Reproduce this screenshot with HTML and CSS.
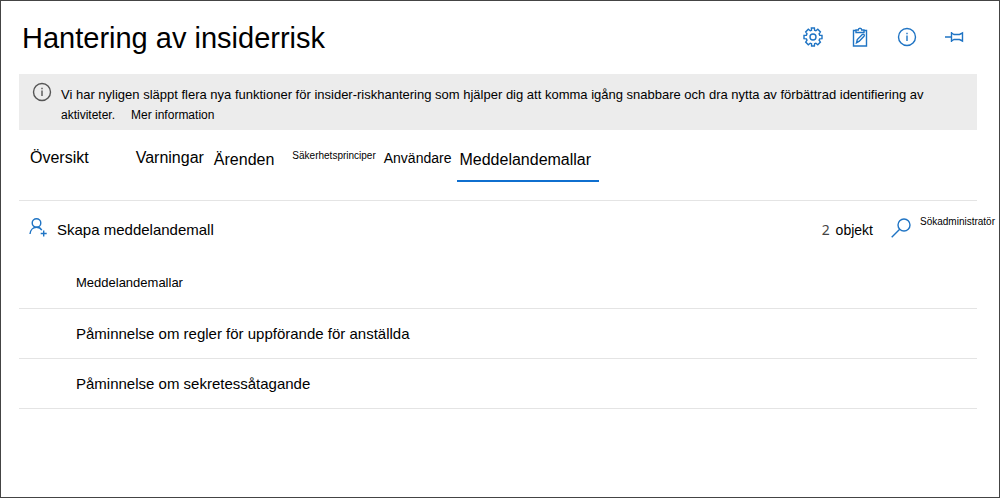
FILE: index.html
```html
<!DOCTYPE html>
<html lang="sv">
<head>
<meta charset="utf-8">
<meta name="viewport" content="width=device-width, initial-scale=1">
<title>Hantering av insiderrisk</title>
<link rel="stylesheet" href="styles.css">
</head>
<body class="page">
<header class="header">
  <h1 class="title">Hantering av insiderrisk</h1>
  <div class="actions">
    <button class="icon-button" type="button" aria-label="Inställningar">
      <svg class="icon" viewBox="0 0 20 20"><path d="M8.400 1L8.500 3.200 7.200 3.800 5.300 2.300 2.700 4.900 4 6.900 3.400 8.300 1 8.400v3.200l2.400.2.600 1.300-1.300 2 2.600 2.600 1.900-1.500 1.300.6.100 2.200h2.800l.2-2.200 1.300-.6 1.900 1.500 2.600-2.600-1.300-2 .6-1.300 2.300-.2V8.400l-2.300-.1-.6-1.400 1.300-2-2.600-2.600-1.900 1.500-1.300-.6L11.400 1z"/><circle cx="10" cy="10" r="3"/></svg>
    </button>
    <button class="icon-button" type="button" aria-label="Uppgifter">
      <svg class="icon" viewBox="0 0 20 20"><path d="M6 3.500H3.500v15.500h13V3.500H14M6 5.500V3h2.300c0-2.400 3.400-2.400 3.400 0H14v2.500z"/><path d="M6.500 15.800l.8-3.300 5-5c1.200-1 2.700.5 1.700 1.700l-4.700 5z"/></svg>
    </button>
    <button class="icon-button" type="button" aria-label="Information">
      <svg class="icon" viewBox="0 0 20 20"><circle cx="10" cy="10" r="8.500"/><path d="M10 8.500V14M10 5.800v1.400"/></svg>
    </button>
    <button class="icon-button" type="button" aria-label="Fäst">
      <svg class="icon" viewBox="0 0 20 20"><path d="M1 10h6.500M7.500 5v10M7.500 6L10 7.500h5.500L18.500 6v8l-3-1.500H10L7.500 14"/></svg>
    </button>
  </div>
</header>
<main>
  <section class="notice">
    <svg class="icon notice-icon" viewBox="0 0 20 20"><circle cx="10" cy="10" r="8.500"/><path d="M10 8.500V14M10 5.800v1.400"/></svg>
    <p class="notice-text">Vi har nyligen släppt flera nya funktioner för insider-riskhantering som hjälper dig att komma igång snabbare och dra nytta av förbättrad identifiering av <span class="notice-end">aktiviteter.<a class="notice-link" href="#">Mer information</a></span></p>
  </section>
  <nav class="tabs">
    <a class="tab tab-overview" href="#">Översikt</a>
    <a class="tab" href="#">Varningar</a>
    <a class="tab tab-low" href="#">Ärenden</a>
    <a class="tab tab-tiny" href="#">Säkerhetsprinciper</a>
    <a class="tab tab-small" href="#">Användare</a>
    <a class="tab tab-low tab-active" href="#" aria-current="page">Meddelandemallar</a>
  </nav>
  <div class="toolbar">
    <button class="create" type="button">
      <svg class="icon create-icon" viewBox="0 0 20 20"><circle cx="8.500" cy="6" r="4.300"/><path d="M2 17c.3-4 3-6.700 6.500-6.700 2.300 0 4.300 1 5.300 3M15.700 13.500v6M12.700 16.500h6"/></svg>
      <span>Skapa meddelandemall</span>
    </button>
    <div class="tools">
      <span class="count"><span class="count-number">2</span> objekt</span>
      <button class="search" type="button">
        <svg class="icon search-icon" viewBox="0 0 20 20"><circle cx="13" cy="7" r="6"/><path d="M8.700 11.300L.7 19.300"/></svg>
        <span class="search-label">Sökadministratör</span>
      </button>
    </div>
  </div>
  <table class="templates">
    <thead><tr><th scope="col">Meddelandemallar</th></tr></thead>
    <tbody>
      <tr><td>Påminnelse om regler för uppförande för anställda</td></tr>
      <tr><td>Påminnelse om sekretessåtagande</td></tr>
    </tbody>
  </table>
</main>
</body>
</html>
```
FILE: styles.css
```css
* {
  box-sizing: border-box;
}

.page {
  margin: 0;
  min-height: 100vh;
  padding: 0 22px 0 18px;
  border: 1px solid #444;
  background: #fff;
  color: #000;
  font-family: "Liberation Sans", Arial, sans-serif;
  font-size: 15px;
}

button {
  padding: 0;
  border: 0;
  background: none;
  color: inherit;
  font: inherit;
  cursor: pointer;
}

a {
  color: inherit;
  text-decoration: none;
}

.icon {
  display: block;
  flex: none;
  width: 20px;
  height: 20px;
  fill: none;
  stroke: #1f74c4;
  stroke-width: 1.4;
}

.header {
  display: flex;
  align-items: center;
  justify-content: space-between;
  height: 73px;
  padding: 0 13px 0 3px;
}

.title {
  margin: 2px 0 0;
  font-size: 29px;
  font-weight: 400;
}

.actions {
  display: flex;
  gap: 27px;
  padding-bottom: 2px;
}

.notice {
  display: flex;
  gap: 9px;
  min-height: 56px;
  padding: 8px 16px 4px 13px;
  background: #ececec;
}

.notice-icon {
  stroke: #555;
}

.notice-text {
  margin: 3px 0 0;
  font-size: 13px;
  line-height: 20px;
}

.notice-end {
  font-size: 12px;
}

.notice-link {
  margin-left: 16px;
}

.tabs {
  display: flex;
  align-items: flex-start;
  gap: 8px;
  height: 71px;
  padding: 18px 0 0 11px;
  border-bottom: 1px solid #e4e4e4;
}

.tab {
  font-size: 16px;
  line-height: 20px;
}

.tab-overview {
  margin-right: 39px;
}

.tab-low {
  padding: 2px 0 0 2px;
}

.tab-tiny {
  margin-left: 10px;
  font-size: 10px;
  line-height: 15px;
}

.tab-small {
  font-size: 14px;
}

.tab-active {
  margin-left: -2px;
  padding: 2px 8px 10px 2px;
  border-bottom: 2px solid #0f6fcf;
}

.toolbar {
  display: flex;
  align-items: center;
  justify-content: space-between;
  height: 57px;
  padding-left: 9px;
}

.create {
  display: flex;
  align-items: center;
  gap: 9px;
}

.create-icon {
  margin-bottom: 6px;
}

.tools {
  display: flex;
  align-items: center;
  gap: 18px;
  margin-right: -18px;
}

.count {
  font-size: 14px;
}

.count-number {
  margin-right: 2px;
  color: #444;
  font-family: "Noto Sans", sans-serif;
}

.search {
  display: flex;
  align-items: flex-start;
  gap: 9px;
  padding-bottom: 6px;
}

.search-icon {
  margin-top: 2px;
}

.search-label {
  font-size: 10px;
}

.templates {
  width: 100%;
  border-collapse: collapse;
}

.templates th,
.templates td {
  height: 50px;
  padding: 0 0 0 57px;
  border-bottom: 1px solid #e4e4e4;
  font-weight: 400;
  text-align: left;
}

.templates th {
  font-size: 13px;
}
```
